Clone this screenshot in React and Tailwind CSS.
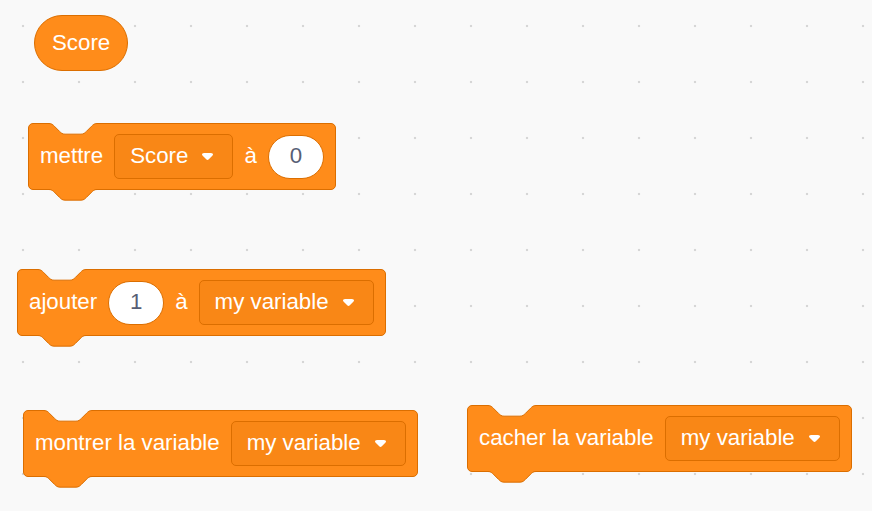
import React from 'react';

// scratch notch curve, scaled up for the zoomed workspace
const NOTCH =
  'c 2.67,0 4,1.33 5.33,2.67 l 5.33,5.33 c 1.33,1.33 2.67,2.67 5.33,2.67 h 16 c 2.67,0 4,-1.33 5.33,-2.67 l 5.33,-5.33 c 1.33,-1.33 2.67,-2.67 5.33,-2.67';

const Arrow = () => (
  <svg width="13" height="9" viewBox="0 0 12.71 8.79" className="shrink-0">
    <path
      fill="#ffffff"
      d="M6.36,7.79a1.43,1.43,0,0,1-1-.42L1.42,3.45a1.44,1.44,0,0,1,0-2c0.56-.56,9.31-.56,9.87,0a1.44,1.44,0,0,1,0,2L7.37,7.37A1.43,1.43,0,0,1,6.36,7.79Z"
    />
  </svg>
);

const Dropdown = ({ label }) => (
  <div className="flex h-[45px] items-center gap-[13px] rounded-[5px] border border-[#db6e00] bg-[#f98716] pl-[15px] pr-[18px]">
    <span>{label}</span>
    <Arrow />
  </div>
);

const NumInput = ({ value }) => (
  <div className="flex h-[44px] min-w-[56px] items-center justify-center rounded-full border border-[#db6e00] bg-white px-[12px] text-[#575e75]">
    {value}
  </div>
);

const StackBlock = ({ className, children }) => (
  <div className={`absolute ${className}`}>
    <div className="relative flex h-[67px] items-center gap-[11px] rounded-[5px] border border-[#db6e00] bg-[#ff8c1a] px-[11px] text-white">
      {/* notch cut into the top edge */}
      <svg width="48" height="13" className="absolute left-[20px] top-[-1px] overflow-visible">
        <path d={`M0,0 L0,0.5 ${NOTCH} L48,0 Z`} fill="#f9f9f9" />
        <path d={`M0,0.5 ${NOTCH}`} fill="none" stroke="#db6e00" strokeWidth="1" />
      </svg>
      {children}
      {/* tab below */}
      <svg width="48" height="13" className="absolute left-[20px] top-full overflow-visible">
        <path d={`M0,0 L0,0.5 ${NOTCH} L48,0 Z`} fill="#ff8c1a" />
        <path d={`M0,0.5 ${NOTCH}`} fill="none" stroke="#db6e00" strokeWidth="1" />
      </svg>
    </div>
  </div>
);

export default function App() {
  return (
    <div className="relative h-[511px] w-[872px] overflow-hidden bg-[#f9f9f9] bg-[radial-gradient(circle,#d6d6d6_1.1px,transparent_1.6px)] bg-[length:56px_56px] bg-[position:-5px_-2px] font-['Liberation_Sans',Arial,sans-serif] text-[22.3px] leading-none">
      {/* reporter */}
      <div className="absolute left-[34px] top-[15px] flex h-[56px] items-center rounded-full border border-[#db6e00] bg-[#ff8c1a] px-[17px] text-white">
        Score
      </div>

      <StackBlock className="left-[28px] top-[123px]">
        <span>mettre</span>
        <Dropdown label="Score" />
        <span>à</span>
        <NumInput value="0" />
      </StackBlock>

      <StackBlock className="left-[17px] top-[269px]">
        <span>ajouter</span>
        <NumInput value="1" />
        <span>à</span>
        <Dropdown label="my variable" />
      </StackBlock>

      <StackBlock className="left-[23px] top-[410px]">
        <span>montrer la variable</span>
        <Dropdown label="my variable" />
      </StackBlock>

      <StackBlock className="left-[467px] top-[405px]">
        <span>cacher la variable</span>
        <Dropdown label="my variable" />
      </StackBlock>
    </div>
  );
}
